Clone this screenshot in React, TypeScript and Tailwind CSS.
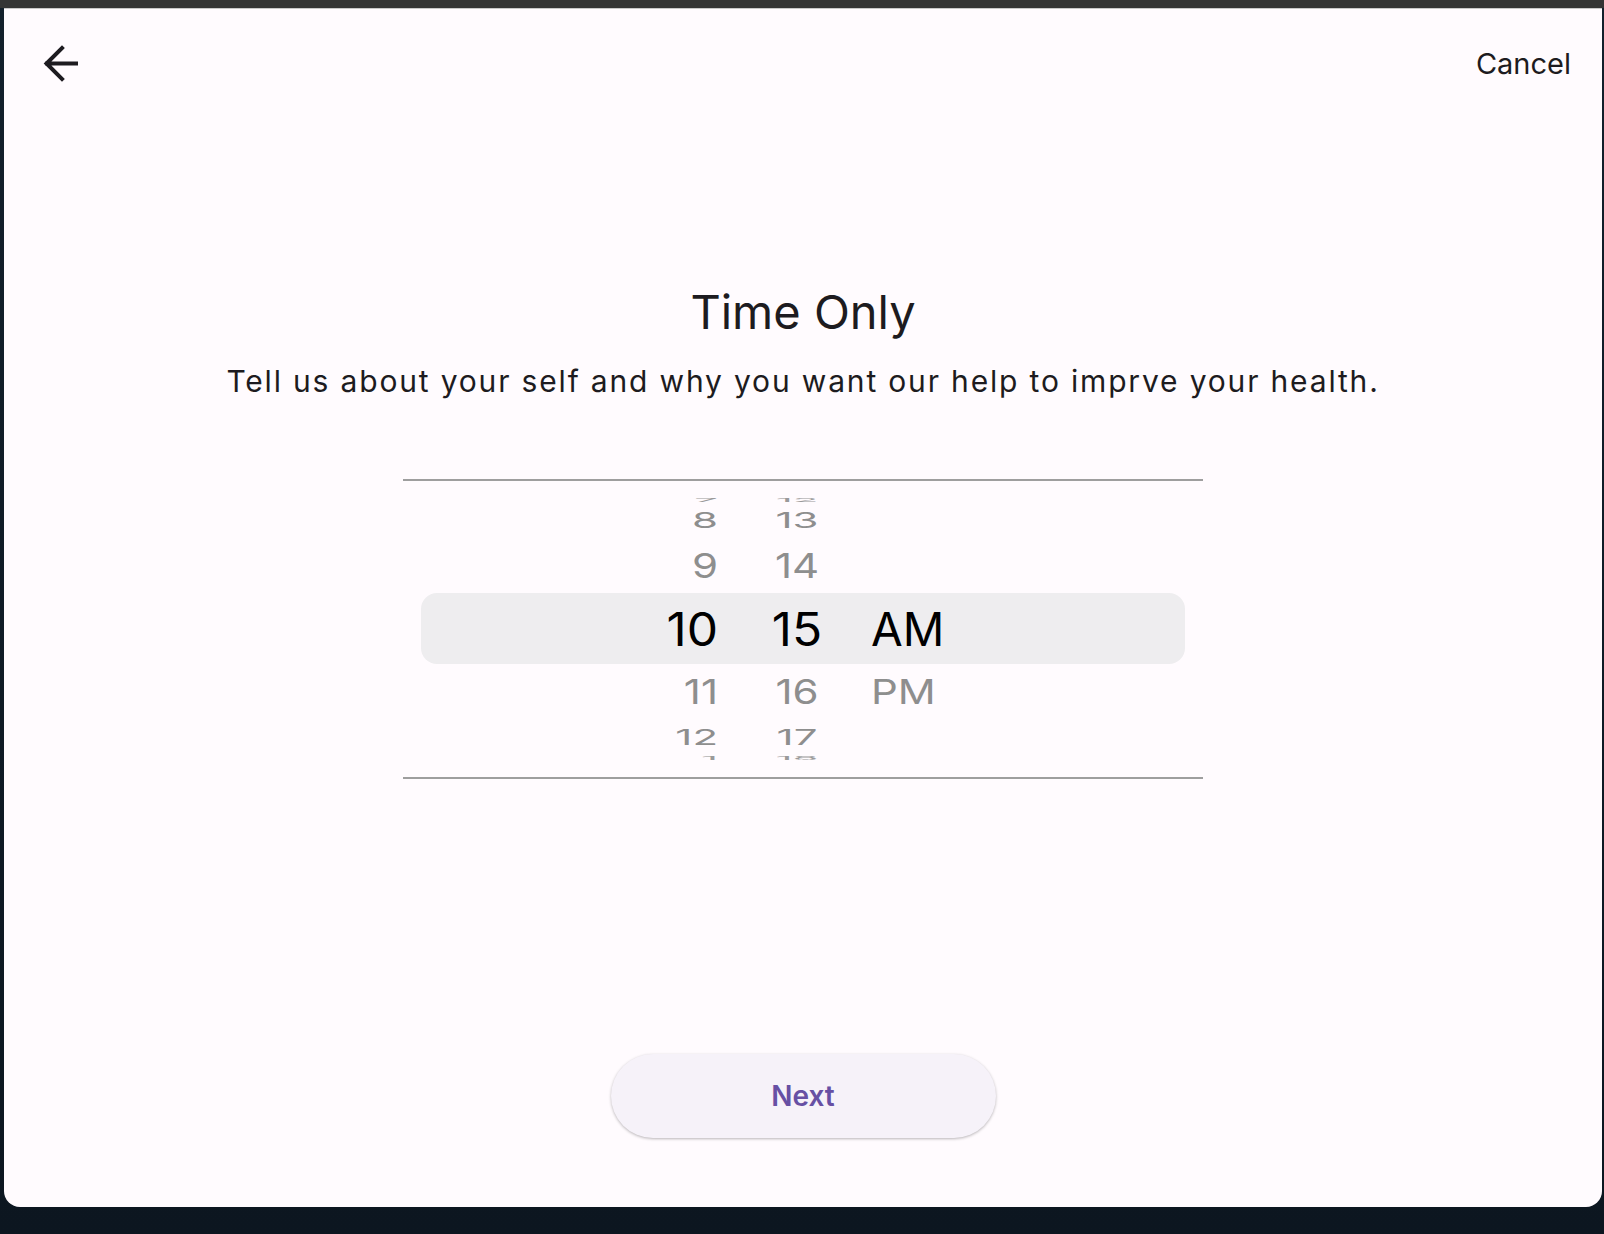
import React from "react";

const gray = "text-[#8e8e8e]";

function Row({
  h,
  hour,
  minute,
  ampm,
  size,
  color = gray,
  scale = "",
}: {
  h: string;
  hour: string;
  minute: string;
  ampm?: string;
  size: string;
  color?: string;
  scale?: string;
}) {
  return (
    <div className={`flex shrink-0 items-center ${h}`}>
      <div className={`w-[315px] shrink-0 text-right leading-none ${size} ${color} ${scale} origin-right`}>{hour}</div>
      <div className={`ml-[20px] w-[118px] shrink-0 text-center leading-none ${size} ${color} ${scale}`}>{minute}</div>
      <div className={`ml-[15px] text-left leading-none ${size} ${color} ${scale} origin-left`}>{ampm ?? ""}</div>
    </div>
  );
}

export default function App() {
  return (
    <div className="relative h-[1234px] w-[1604px] overflow-hidden bg-[linear-gradient(180deg,#13202c_0%,#0c1620_100%)] font-['Inter','Noto_Sans',sans-serif]">
      <div className="h-[8px] w-full bg-[#353535]" />
      <div className="ml-[4px] flex h-[1199px] w-[1598px] flex-col rounded-b-[16px] border-t border-[#c9c9c9] bg-[#fffbfe]">
        {/* header */}
        <div className="flex h-[109px] items-center justify-between pl-[36px] pr-[31px]">
          <svg width="40" height="40" viewBox="0 0 40 40" fill="none">
            <path
              d="M36 19.5H7M22 4L6.5 19.5L22 35"
              stroke="#1d1b20"
              strokeWidth="4"
              strokeLinecap="square"
            />
          </svg>
          <div className="text-[29px] leading-none text-[#1d1b20]">Cancel</div>
        </div>

        {/* title */}
        <div className="mt-[166px] text-center text-[47px] leading-[1.2] text-[#1d1b20]">Time Only</div>
        <div className="mt-[23px] text-center text-[30px] leading-[1.2] tracking-[0.061em] text-[#1d1b20]">
          Tell us about your self and why you want our help to imprve your health.
        </div>

        {/* picker */}
        <div className="mx-auto mt-[80px] w-[800px] border-y-2 border-[#9e9e9e]">
          <div className="flex h-[296px] flex-col overflow-hidden">
            <div className="h-[9px] shrink-0" />
            <Row h="h-[20px]" hour="7" minute="12" size="text-[42px]" scale="scale-y-[0.13]" color="text-[#9a9a9a]" />
            <Row h="h-[20px]" hour="8" minute="13" size="text-[42px]" scale="scale-y-[0.52]" />
            <Row h="h-[72px]" hour="9" minute="14" size="text-[42px]" scale="scale-y-[0.82]" />
            <div className="-my-[9px] mx-[18px] flex h-[71px] shrink-0 items-center rounded-[16px] bg-[#eeedef]">
              <div className="w-[297px] shrink-0 origin-right scale-x-[1.08] text-right text-[46px] leading-none text-black">10</div>
              <div className="ml-[20px] w-[118px] shrink-0 scale-x-[1.08] text-center text-[46px] leading-none text-black">15</div>
              <div className="ml-[15px] text-left text-[46px] leading-none text-black">AM</div>
            </div>
            <Row h="h-[73px]" hour="11" minute="16" ampm="PM" size="text-[42px]" scale="scale-y-[0.82]" />
            <Row h="h-[18px]" hour="12" minute="17" size="text-[42px]" scale="scale-y-[0.5]" />
            <Row h="h-[24px]" hour="1" minute="18" size="text-[42px]" scale="scale-y-[0.13]" color="text-[#9a9a9a]" />
          </div>
        </div>

        {/* button */}
        <div className="mt-[275px] flex justify-center">
          <button className="flex h-[84px] w-[385px] items-center justify-center rounded-full bg-[#f6f2f9] text-[28px] font-semibold text-[#6750a4] shadow-[0_1px_3px_rgba(0,0,0,0.28)]">
            Next
          </button>
        </div>
      </div>
    </div>
  );
}
